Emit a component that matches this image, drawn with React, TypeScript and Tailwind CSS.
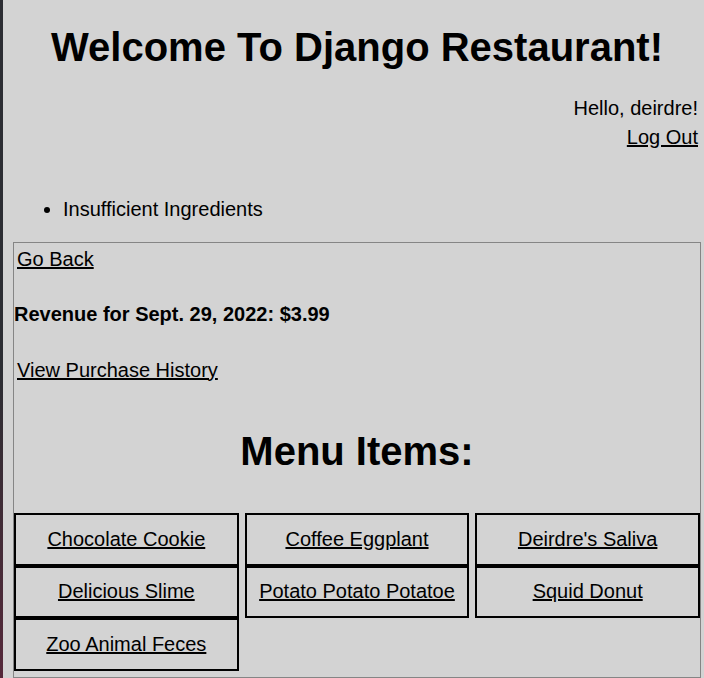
const menuItems = [
  "Chocolate Cookie",
  "Coffee Eggplant",
  "Deirdre's Saliva",
  "Delicious Slime",
  "Potato Potato Potatoe",
  "Squid Donut",
  "Zoo Animal Feces",
];

const App = () => {
  return (
    <div className="flex min-h-screen bg-[#d3d3d3] font-['Liberation_Sans',Arial,sans-serif] text-[20px] leading-[23px] text-black">
      {/* window edge */}
      <div className="w-[3px] shrink-0 bg-linear-to-b from-[#2c2d33] from-55% to-[#55283a]" />

      <div className="min-w-0 flex-1 pl-[10px] pr-[3px]">
        <h1 className="mt-[24px] text-center text-[40px] font-bold leading-[46px]">
          Welcome To Django Restaurant!
        </h1>

        <div className="mt-[27px] pr-[3px] text-right">
          <p>Hello, deirdre!</p>
          <p className="mt-[6px]">
            <a href="#" className="underline">
              Log Out
            </a>
          </p>
        </div>

        <ul className="mt-[48.5px] list-disc pl-[50px]">
          <li>Insufficient Ingredients</li>
        </ul>

        <div className="mt-[21px] border border-[#858585] pb-[6px]">
          <a href="#" className="ml-[3px] mt-[5.5px] inline-block underline">
            Go Back
          </a>
          <h4 className="mt-[31.5px] font-bold">Revenue for Sept. 29, 2022: $3.99</h4>
          <a href="#" className="ml-[3px] mt-[33px] inline-block underline">
            View Purchase History
          </a>
          <h2 className="mt-[46px] text-center text-[40px] font-bold leading-[46px]">Menu Items:</h2>

          <div className="mt-[39.5px] grid grid-cols-3 gap-x-[6px]">
            {menuItems.map((item) => (
              <div
                key={item}
                className="flex h-[52.5px] items-center justify-center border-[2.5px] border-black"
              >
                <a href="#" className="underline">
                  {item}
                </a>
              </div>
            ))}
          </div>
        </div>
      </div>
    </div>
  );
};

export default App;
